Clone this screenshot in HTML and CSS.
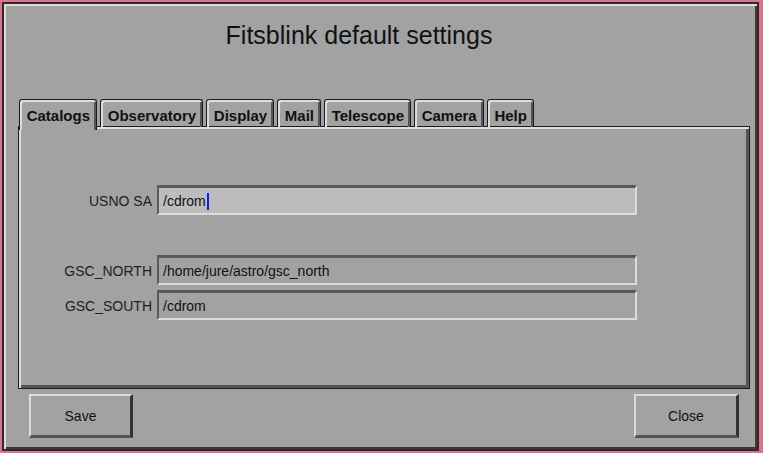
FILE: index.html
```html
<!DOCTYPE html>
<html>
<head>
<meta charset="utf-8">
<link rel="stylesheet" href="styles.css">
</head>
<body>
<div class="window">
  <div class="title">Fitsblink default settings</div>
  <div class="tabs">
    <div class="tab selected">Catalogs</div>
    <div class="tab">Observatory</div>
    <div class="tab">Display</div>
    <div class="tab">Mail</div>
    <div class="tab">Telescope</div>
    <div class="tab">Camera</div>
    <div class="tab">Help</div>
  </div>
  <div class="panel">
    <div class="row">
      <div class="label">USNO SA</div>
      <div class="field focused">/cdrom<span class="caret"></span></div>
    </div>
    <div class="row spaced">
      <div class="label">GSC_NORTH</div>
      <div class="field">/home/jure/astro/gsc_north</div>
    </div>
    <div class="row">
      <div class="label">GSC_SOUTH</div>
      <div class="field">/cdrom</div>
    </div>
  </div>
  <div class="buttons">
    <div class="button save">Save</div>
    <div class="button close">Close</div>
  </div>
</div>
</body>
</html>
```

FILE: styles.css
```css
html, body {
  margin: 0;
  padding: 0;
}
body {
  background: #e2708a;
  width: 763px;
  height: 453px;
  overflow: hidden;
  font-family: "Liberation Sans", Arial, sans-serif;
}
.window {
  box-sizing: border-box;
  margin: 2px 4px 2px 2px;
  width: 757px;
  height: 449px;
  border: 2px solid #2c2c2c;
  background: #a2a2a2;
  box-shadow: inset 2px 2px 0 #dcdcdc, inset -2px -2px 0 #3a3a3a;
  display: flex;
  flex-direction: column;
  padding: 0 7px 9px 14px;
}
.title {
  height: 95px;
  box-sizing: border-box;
  padding-top: 17px;
  padding-right: 50px;
  font-size: 25px;
  line-height: 28px;
  color: #111;
  text-align: center;
}
.tabs {
  height: 27px;
  display: flex;
  gap: 3px;
  padding-left: 1px;
  position: relative;
  z-index: 2;
}
.tab {
  box-sizing: border-box;
  height: 28px;
  padding: 0 6px 0 6.7px;
  border: 1px solid #1c1c1c;
  border-bottom: none;
  border-radius: 3px 3px 0 0;
  box-shadow: inset 2px 2px 0 #dcdcdc, inset -2px 0 0 #555;
  font-weight: bold;
  font-size: 15px;
  line-height: 31px;
  color: #111;
}
.tab.selected {
  height: 31px;
  background: #a2a2a2;
}
.panel {
  height: 263px;
  box-sizing: border-box;
  border: 1px solid #1c1c1c;
  box-shadow: inset 2px 2px 0 #dcdcdc, inset -3px -3px 0 #555;
  padding-top: 58px;
  display: flex;
  flex-direction: column;
  gap: 5px;
}
.row {
  display: flex;
  gap: 5px;
  height: 30px;
}
.row.spaced {
  margin-top: 35px;
}
.label {
  width: 133px;
  text-align: right;
  font-size: 14px;
  line-height: 32px;
  color: #1e1e1e;
}
.field {
  box-sizing: border-box;
  width: 480px;
  height: 30px;
  border-style: solid;
  border-width: 3px 2px 2px 2px;
  border-color: #5a5a5a #dcdcdc #dcdcdc #5a5a5a;
  padding: 2px 0 0 4px;
  font-size: 14px;
  line-height: 23px;
  color: #111;
  display: flex;
  align-items: center;
}
.field.focused {
  background: #bdbdbd;
}
.caret {
  display: inline-block;
  width: 2px;
  height: 17px;
  background: #1414ff;
  margin-left: 1px;
}
.buttons {
  margin-top: 5px;
  height: 44px;
  display: flex;
  justify-content: space-between;
  padding: 0 11px 0 11px;
}
.button {
  box-sizing: border-box;
  height: 44px;
  border-style: solid;
  border-width: 2px 3px 3px 2px;
  border-color: #dcdcdc #333 #555 #dcdcdc;
  font-size: 14px;
  color: #111;
  display: flex;
  align-items: center;
  justify-content: center;
  padding-top: 1px;
}
.button.save {
  width: 104px;
}
.button.close {
  width: 105px;
}
```
